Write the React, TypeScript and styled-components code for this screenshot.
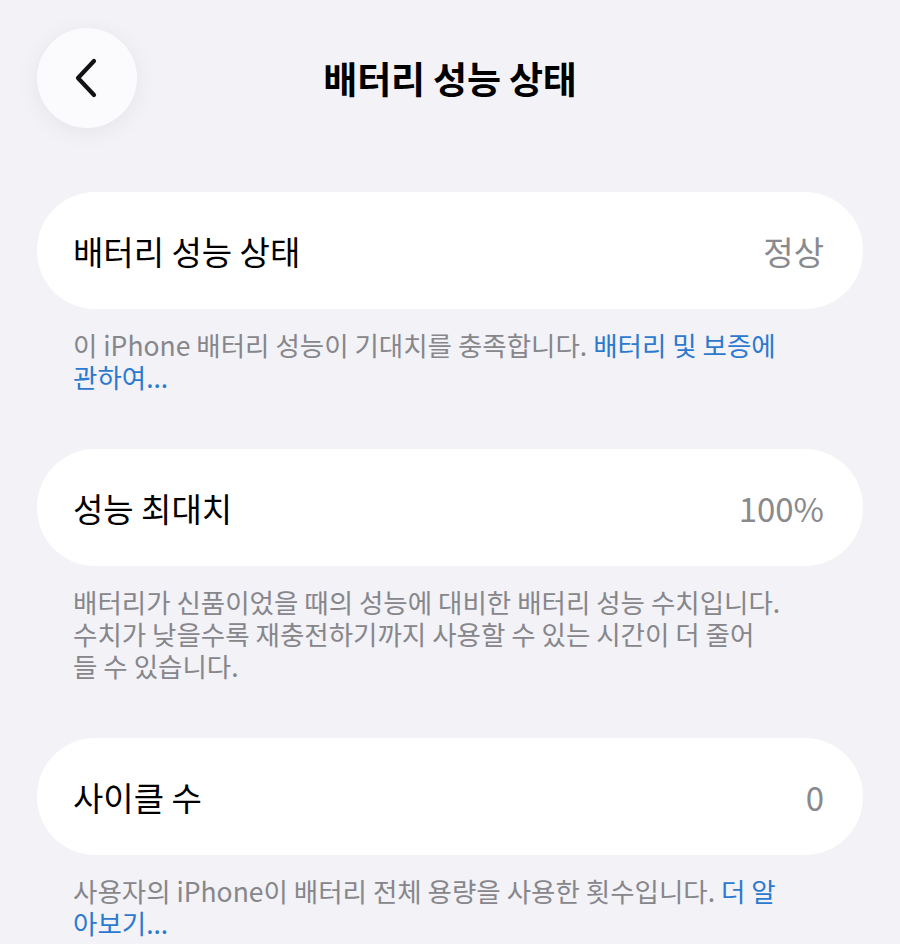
import React from "react";
import styled, { createGlobalStyle } from "styled-components";

const GlobalStyle = createGlobalStyle`
  html, body {
    margin: 0;
    padding: 0;
    background: #f2f2f7;
  }
  body {
    font-family: "Noto Sans CJK KR", "Noto Sans", sans-serif;
    -webkit-font-smoothing: antialiased;
  }
`;

const Page = styled.div`
  width: 900px;
  min-height: 944px;
  background: #f2f2f7;
  overflow: hidden;
`;

const Header = styled.header`
  display: grid;
  grid-template-columns: 100px 1fr 100px;
  align-items: center;
  padding: 28px 37px 0;
`;

const BackButton = styled.button`
  width: 100px;
  height: 100px;
  border: none;
  border-radius: 50%;
  background: #fbfbfd;
  box-shadow: 0 4px 24px rgba(0, 0, 0, 0.06);
  display: flex;
  align-items: center;
  justify-content: center;
  padding: 0;
  cursor: pointer;
`;

const Title = styled.h1`
  margin: 0;
  text-align: center;
  font-size: 37px;
  font-weight: 700;
  color: #000;
  letter-spacing: -0.2px;
`;

const Content = styled.main`
  padding: 64px 37px 0;
  display: flex;
  flex-direction: column;
  gap: 56px;
`;

const Section = styled.section`
  display: flex;
  flex-direction: column;
`;

const Card = styled.div`
  height: 117px;
  border-radius: 58px;
  background: #ffffff;
  display: flex;
  align-items: center;
  justify-content: space-between;
  padding: 0 39px 0 36px;
`;

const Label = styled.span`
  font-size: 33px;
  color: #000;
`;

const Value = styled.span`
  font-size: 33px;
  color: #8a8a8e;
`;

const Footer = styled.p`
  margin: 0;
  padding: 20px 30px 0 36px;
  font-size: 26.5px;
  line-height: 32px;
  color: #86868b;
  white-space: nowrap;
`;

const Link = styled.a`
  color: #2c79d0;
  text-decoration: none;
`;

const Chevron = () => (
  <svg width="30" height="44" viewBox="0 0 30 44" fill="none">
    <path
      d="M22 5 L6 22 L22 39"
      stroke="#111"
      strokeWidth="4.2"
      strokeLinecap="round"
      strokeLinejoin="round"
    />
  </svg>
);

type Row = {
  label: string;
  value: string;
  note: React.ReactNode;
};

const rows: Row[] = [
  {
    label: "배터리 성능 상태",
    value: "정상",
    note: (
      <>
        이 iPhone 배터리 성능이 기대치를 충족합니다.{" "}
        <Link>
          배터리 및 보증에
          <br />
          관하여...
        </Link>
      </>
    ),
  },
  {
    label: "성능 최대치",
    value: "100%",
    note: (
      <>
        배터리가 신품이었을 때의 성능에 대비한 배터리 성능 수치입니다.
        <br />
        수치가 낮을수록 재충전하기까지 사용할 수 있는 시간이 더 줄어
        <br />들 수 있습니다.
      </>
    ),
  },
  {
    label: "사이클 수",
    value: "0",
    note: (
      <>
        사용자의 iPhone이 배터리 전체 용량을 사용한 횟수입니다.{" "}
        <Link>
          더 알
          <br />
          아보기...
        </Link>
      </>
    ),
  },
];

export default function App() {
  return (
    <Page>
      <GlobalStyle />
      <Header>
        <BackButton aria-label="뒤로">
          <Chevron />
        </BackButton>
        <Title>배터리 성능 상태</Title>
        <span />
      </Header>
      <Content>
        {rows.map((row) => (
          <Section key={row.label}>
            <Card>
              <Label>{row.label}</Label>
              <Value>{row.value}</Value>
            </Card>
            <Footer>{row.note}</Footer>
          </Section>
        ))}
      </Content>
    </Page>
  );
}
